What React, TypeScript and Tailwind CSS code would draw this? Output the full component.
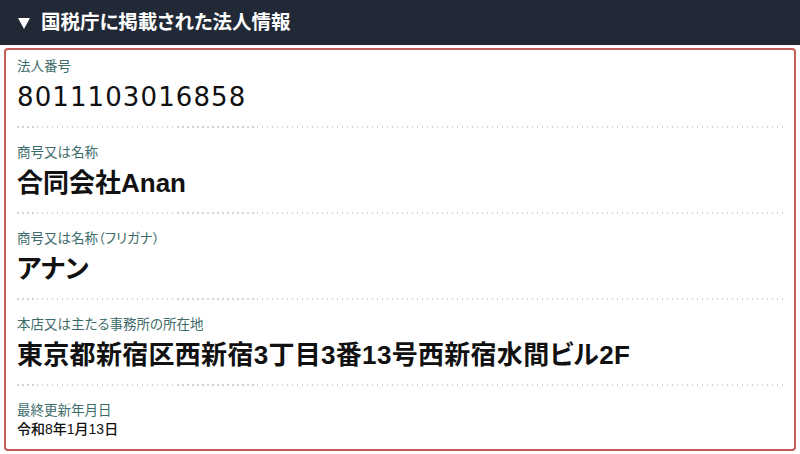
import React from "react";

const FONT = '"Liberation Sans", "Noto Sans CJK JP", sans-serif';

function Sep() {
  return (
    <div className="h-[2px] bg-[repeating-linear-gradient(to_right,#d2d2d2_0px,#d2d2d2_1.5px,transparent_1.5px,transparent_5px)]" />
  );
}

function Row({
  label,
  value,
  first,
  valueClass,
}: {
  label: string;
  value: string;
  first?: boolean;
  valueClass: string;
}) {
  return (
    <div className="px-[11px]">
      <div className={first ? "pt-[8px]" : "pt-[16px]"}>
        <div className="text-[13.5px] leading-[18px] text-[#3d6b6a]">{label}</div>
        <div className={"mt-1 leading-[34px] text-[#111] " + valueClass}>{value}</div>
      </div>
      <div className="pb-[12px]" />
      <Sep />
    </div>
  );
}

export default function App() {
  return (
    <div
      className="w-[800px] h-[454px] bg-white overflow-hidden [font-feature-settings:'palt']"
      style={{ fontFamily: FONT }}
    >
      <div className="h-[45px] bg-[#212936] flex items-center pl-[18px] gap-[11px]">
        <svg width="12" height="11" viewBox="0 0 12 11" className="mt-[1px]">
          <polygon points="0,0 12,0 6,11" fill="#ffffff" />
        </svg>
        <span className="text-white text-[19.5px] font-bold leading-none">
          国税庁に掲載された法人情報
        </span>
      </div>
      <div className="mx-[4px] mt-[3px] h-[403px] border-[2.5px] border-[#c35d57] rounded-[4px] flex flex-col">
        <Row
          first
          label="法人番号"
          value="8011103016858"
          valueClass="text-[26px] tracking-[1.1px] font-normal [font-family:'DejaVu_Sans',sans-serif]"
        />
        <Row label="商号又は名称" value="合同会社Anan" valueClass="text-[26px] font-bold" />
        <Row
          label="商号又は名称（フリガナ）"
          value="アナン"
          valueClass="text-[26px] font-bold"
        />
        <Row
          label="本店又は主たる事務所の所在地"
          value="東京都新宿区西新宿3丁目3番13号西新宿水間ビル2F"
          valueClass="text-[26px] font-bold tracking-[0.3px]"
        />
        <div className="px-[11px] pt-[16px]">
          <div className="text-[13.5px] leading-[18px] text-[#3d6b6a]">最終更新年月日</div>
          <div className="text-[14px] leading-[18px] font-medium text-[#111]">令和8年1月13日</div>
        </div>
      </div>
    </div>
  );
}
